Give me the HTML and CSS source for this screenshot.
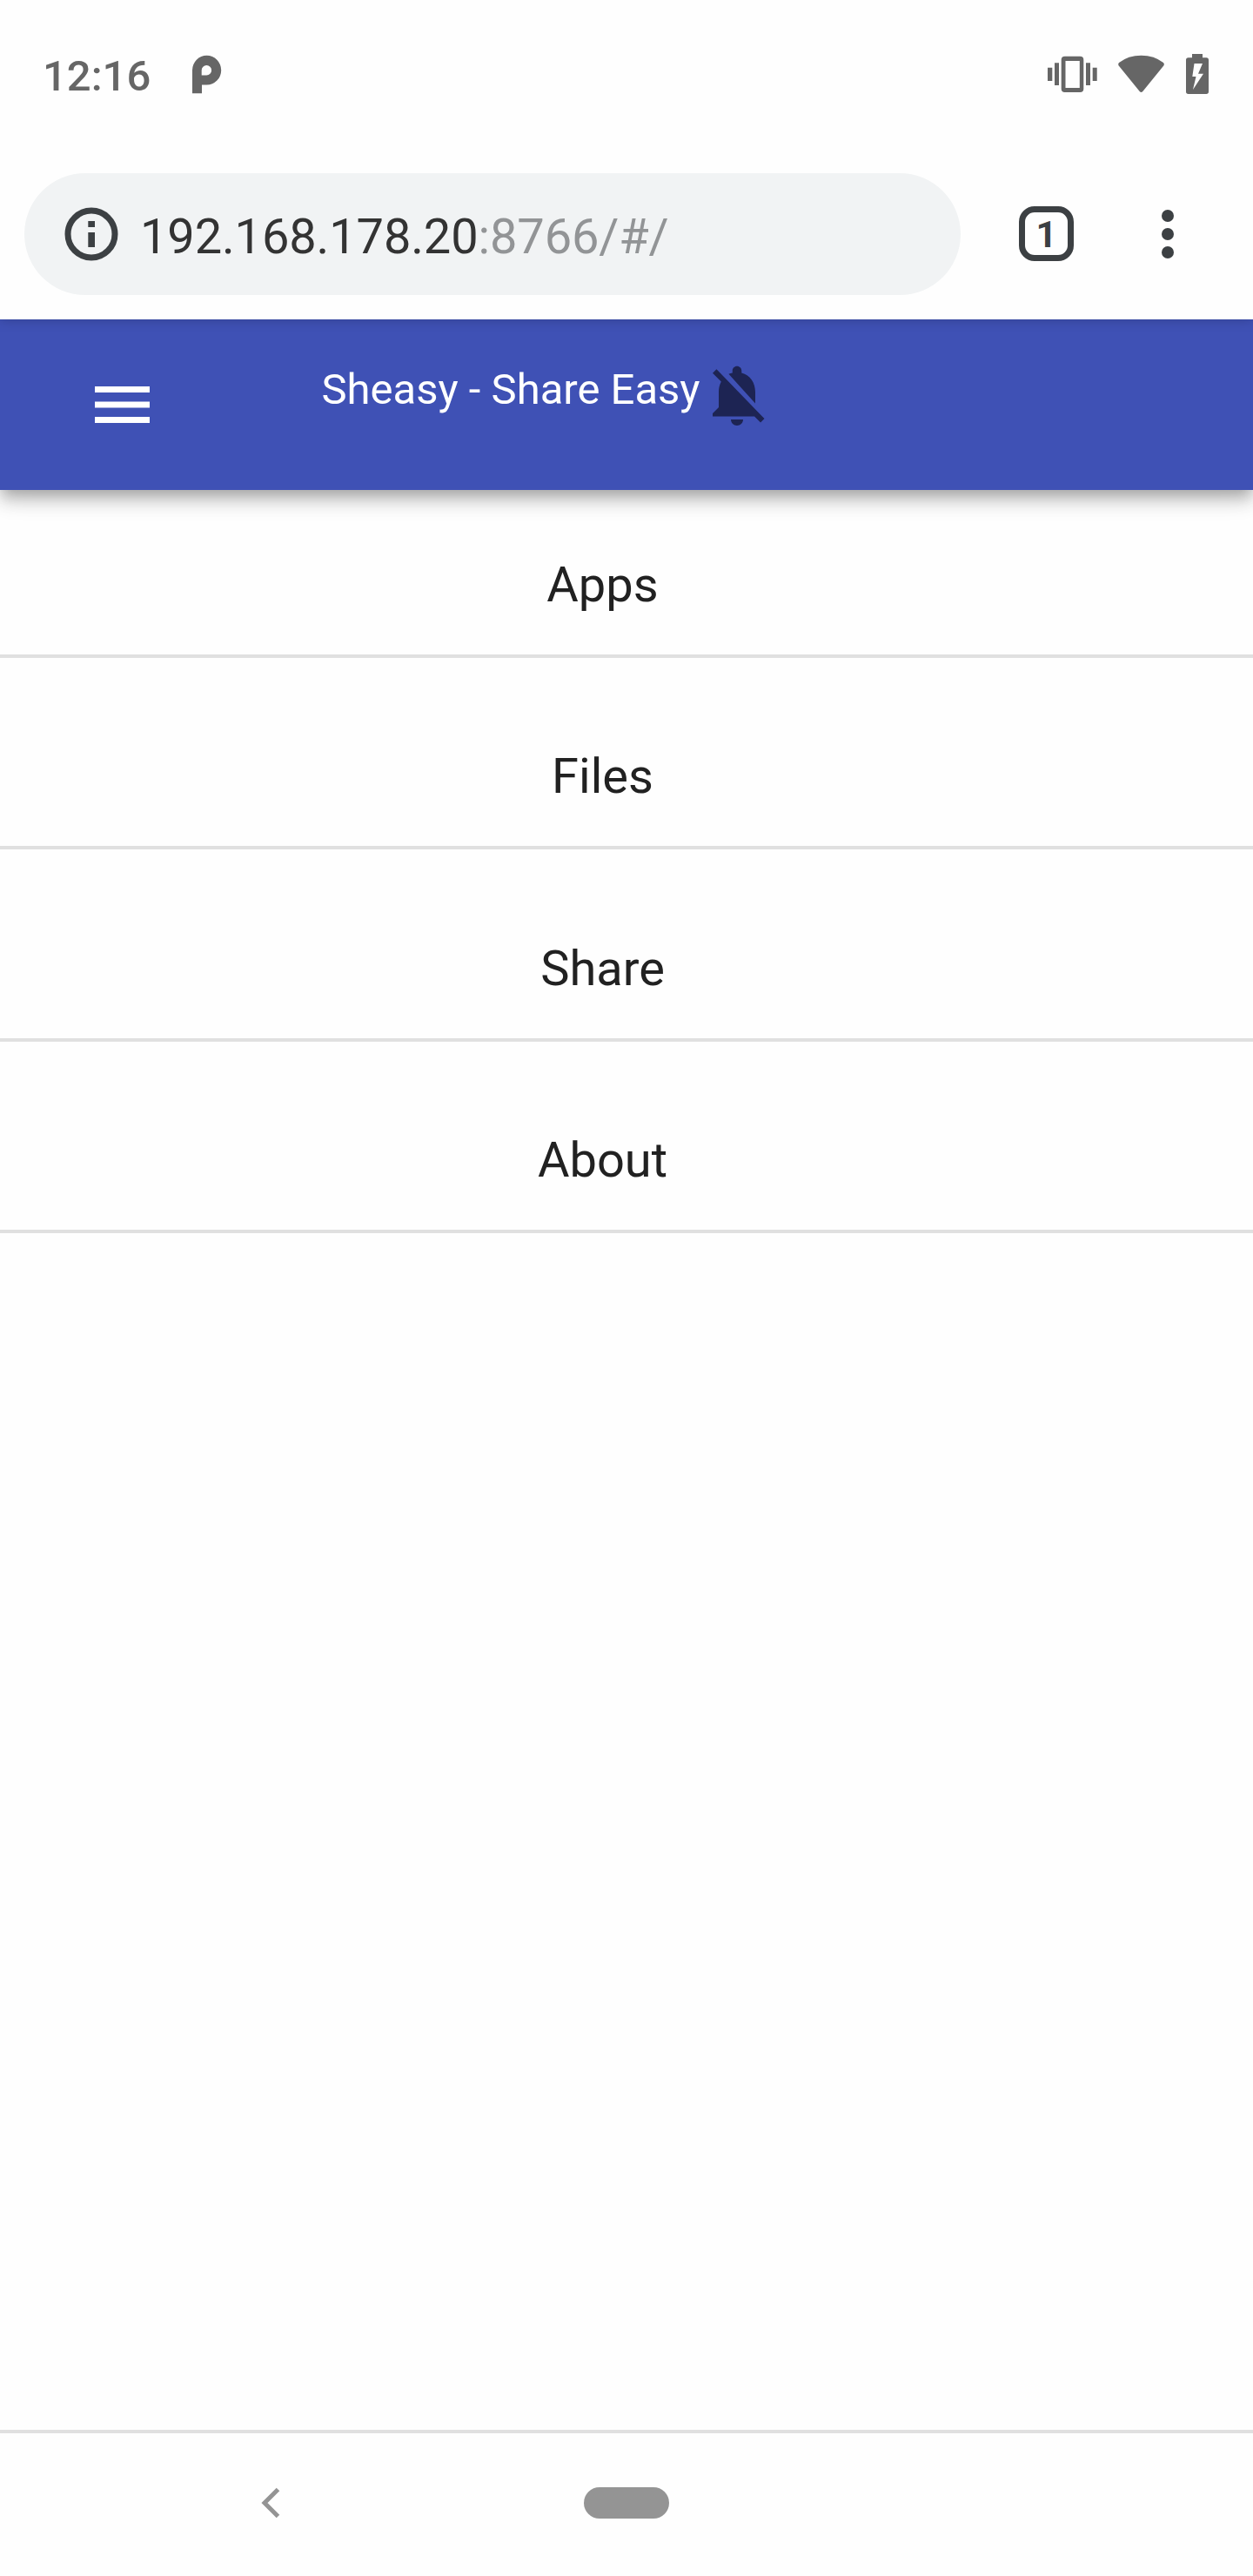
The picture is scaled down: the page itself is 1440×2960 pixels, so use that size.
FILE: index.html
```html
<!DOCTYPE html>
<html lang="en">
<head>
<meta charset="utf-8">
<title>Sheasy - Share Easy</title>
<link rel="stylesheet" href="styles.css">
</head>
<body>
<div class="phone">
  <div class="chrome">
    <div class="status">
      <span class="time">12:16</span>
      <svg class="pie" viewBox="220 62 36 48" width="36" height="48"><path fill-rule="evenodd" d="M221 107.3V80.7A16.6 17 0 0 1 254.200 80.700A16.600 16.800 0 0 1 237.600 97.500H232V107.300ZM231.700 86.400V80.700A5.700 5.700 0 1 1 237.400 86.400Z"/></svg>
      <svg class="indicators" viewBox="1204 60 186 50" width="186" height="50">
        <path fill-rule="evenodd" d="M1204 77.700h5.300v15.300h-5.300zM1212 72.300h5v25.700h-5zM1248 72.300h5v25.700h-5zM1255.700 77.700h5v15.300h-5zM1223.700 64.700h17.600a4 4 0 0 1 4 4v33.300a4 4 0 0 1-4 4h-17.600a4 4 0 0 1-4-4v-33.300a4 4 0 0 1 4-4zM1224.500 70v31h16.300v-31z"/>
        <path d="M1286 72Q1296.500 63.700 1311.500 63.700T1337 72Q1338.800 73.500 1337.300 75.500L1313.300 105Q1311.500 107 1309.700 105L1285.700 75.500Q1284.300 73.500 1286 72Z"/>
        <path fill-rule="evenodd" d="M1370 62h12v4.300h4.300a2.700 2.700 0 0 1 2.700 2.700v36.300a2.700 2.700 0 0 1-2.700 2.700h-20.600a2.700 2.700 0 0 1-2.700-2.700v-36.300a2.700 2.700 0 0 1 2.700-2.700h4.300zM1372.500 73L1370.300 88H1374.500L1371 103L1383 84.700H1377L1382 73Z"/>
      </svg>
    </div>
    <div class="toolbar">
      <div class="omnibox">
        <svg class="info" viewBox="0 0 62 62" width="62" height="62"><circle cx="31" cy="31" r="27"/><path d="M27.300 16h7.700v7h-7.700zM27.300 29h7.700v17h-7.700z"/></svg>
        <span class="url">192.168.178.20<span class="port">:8766/#/</span></span>
      </div>
      <div class="tabs">1</div>
      <div class="more"><i></i><i></i><i></i></div>
    </div>
  </div>
  <header class="appbar">
    <div class="menu"><svg viewBox="0 0 18 12" width="63" height="42"><path d="M0 0h18v2H0zM0 5h18v2H0zM0 10h18v2H0z"/></svg></div>
    <span class="title">Sheasy - Share Easy</span>
    <svg class="bell" viewBox="0 0 24 24" width="84" height="84"><path d="M20 18.690L7.840 6.140 5.270 3.490 4 4.760l2.800 2.800v.010c-.520.990-.800 2.070-.800 3.420v5l-2 2v1h13.730l2 2L21 19.720l-1-1.030zM12 22c1.110 0 2-.890 2-2h-4c0 1.110.890 2 2 2zm6-7.320V11c0-3.080-1.640-5.640-4.500-6.320V4c0-.830-.670-1.500-1.500-1.500s-1.500.670-1.500 1.500v.680c-.440.100-.850.230-1.230.420L18 14.680z"/></svg>
  </header>
  <main class="list">
    <div class="row first">Apps</div>
    <div class="row">Files</div>
    <div class="row tall">Share</div>
    <div class="row">About</div>
  </main>
  <nav class="navbar">
    <svg class="back" viewBox="0 0 22 36" width="22" height="36"><path d="M19.500 2.500L4 18L19.500 33.500"/></svg>
    <div class="home"></div>
  </nav>
</div>
</body>
</html>
```
FILE: styles.css
```css
* { box-sizing: border-box; }
body { margin: 0; background: #fefefe; font-family: Roboto, sans-serif; }
svg { display: block; flex: none; }
.phone { width: 1440px; height: 2960px; display: flex; flex-direction: column; overflow: hidden; }

.chrome { height: 367px; flex: none; position: relative; z-index: 2; background: #fefefe; box-shadow: 0 0 14px rgba(0,0,0,.22); }
.status { height: 171px; padding: 0 50px 0 49px; display: flex; align-items: center; color: #666; fill: #666; }
.time { font-size: 49px; font-weight: 500; line-height: 58px; width: 171px; padding-top: 4px; white-space: nowrap; }
.pie { margin-top: 1px; }
.indicators { margin-left: auto; margin-top: -1px; }

.toolbar { height: 196px; padding: 28px 0 0 28px; display: flex; align-items: flex-start; }
.omnibox { width: 1076px; height: 140px; border-radius: 70px; background: #f1f3f4; padding-left: 46px; display: flex; align-items: center; }
.info { fill: #3c4043; }
.info circle { fill: none; stroke: #3c4043; stroke-width: 7; }
.url { margin-left: 25px; padding-top: 5px; font-size: 56px; line-height: 66px; letter-spacing: -.14px; color: #333; white-space: nowrap; }
.port { color: #929496; }
.tabs { width: 63px; height: 63px; margin: 38px 0 0 67px; border: 7px solid #3c4043; border-radius: 18px; color: #3c4043; font-size: 42px; font-weight: 700; line-height: 51px; text-align: center; }
.more { margin: 42px 0 0 101px; display: flex; flex-direction: column; gap: 7px; }
.more i { width: 14px; height: 14px; border-radius: 50%; background: #3c4043; }

.appbar { height: 196px; flex: none; position: relative; z-index: 1; display: flex; align-items: flex-start; background: #3f51b5; box-shadow: 0 7px 14px -3.5px rgba(0,0,0,.2), 0 14px 17.5px rgba(0,0,0,.14), 0 3.5px 35px rgba(0,0,0,.12); }
.menu { width: 369.5px; padding: 77px 0 0 108.5px; fill: #fff; }
.title { width: 435.5px; padding-top: 52px; font-size: 49px; line-height: 58px; color: #fff; white-space: nowrap; }
.bell { margin-top: 45px; fill: #1d2453; }

.list { flex: 1; }
.row { height: 220px; padding: 0 55px 38px 0; display: flex; align-items: flex-end; justify-content: center; font-size: 56px; line-height: 84px; color: #212121; border-bottom: 4px solid #e0e0e0; }
.first { height: 193px; }
.tall { height: 221px; }

.navbar { height: 168px; flex: none; border-top: 4px solid #e0e0e0; padding: 62px 0 0 300px; display: flex; align-items: flex-start; }
.back { fill: none; stroke: #949494; stroke-width: 5; }
.home { width: 98px; height: 36px; margin-left: 349px; border-radius: 18px; background: #949494; }
```
